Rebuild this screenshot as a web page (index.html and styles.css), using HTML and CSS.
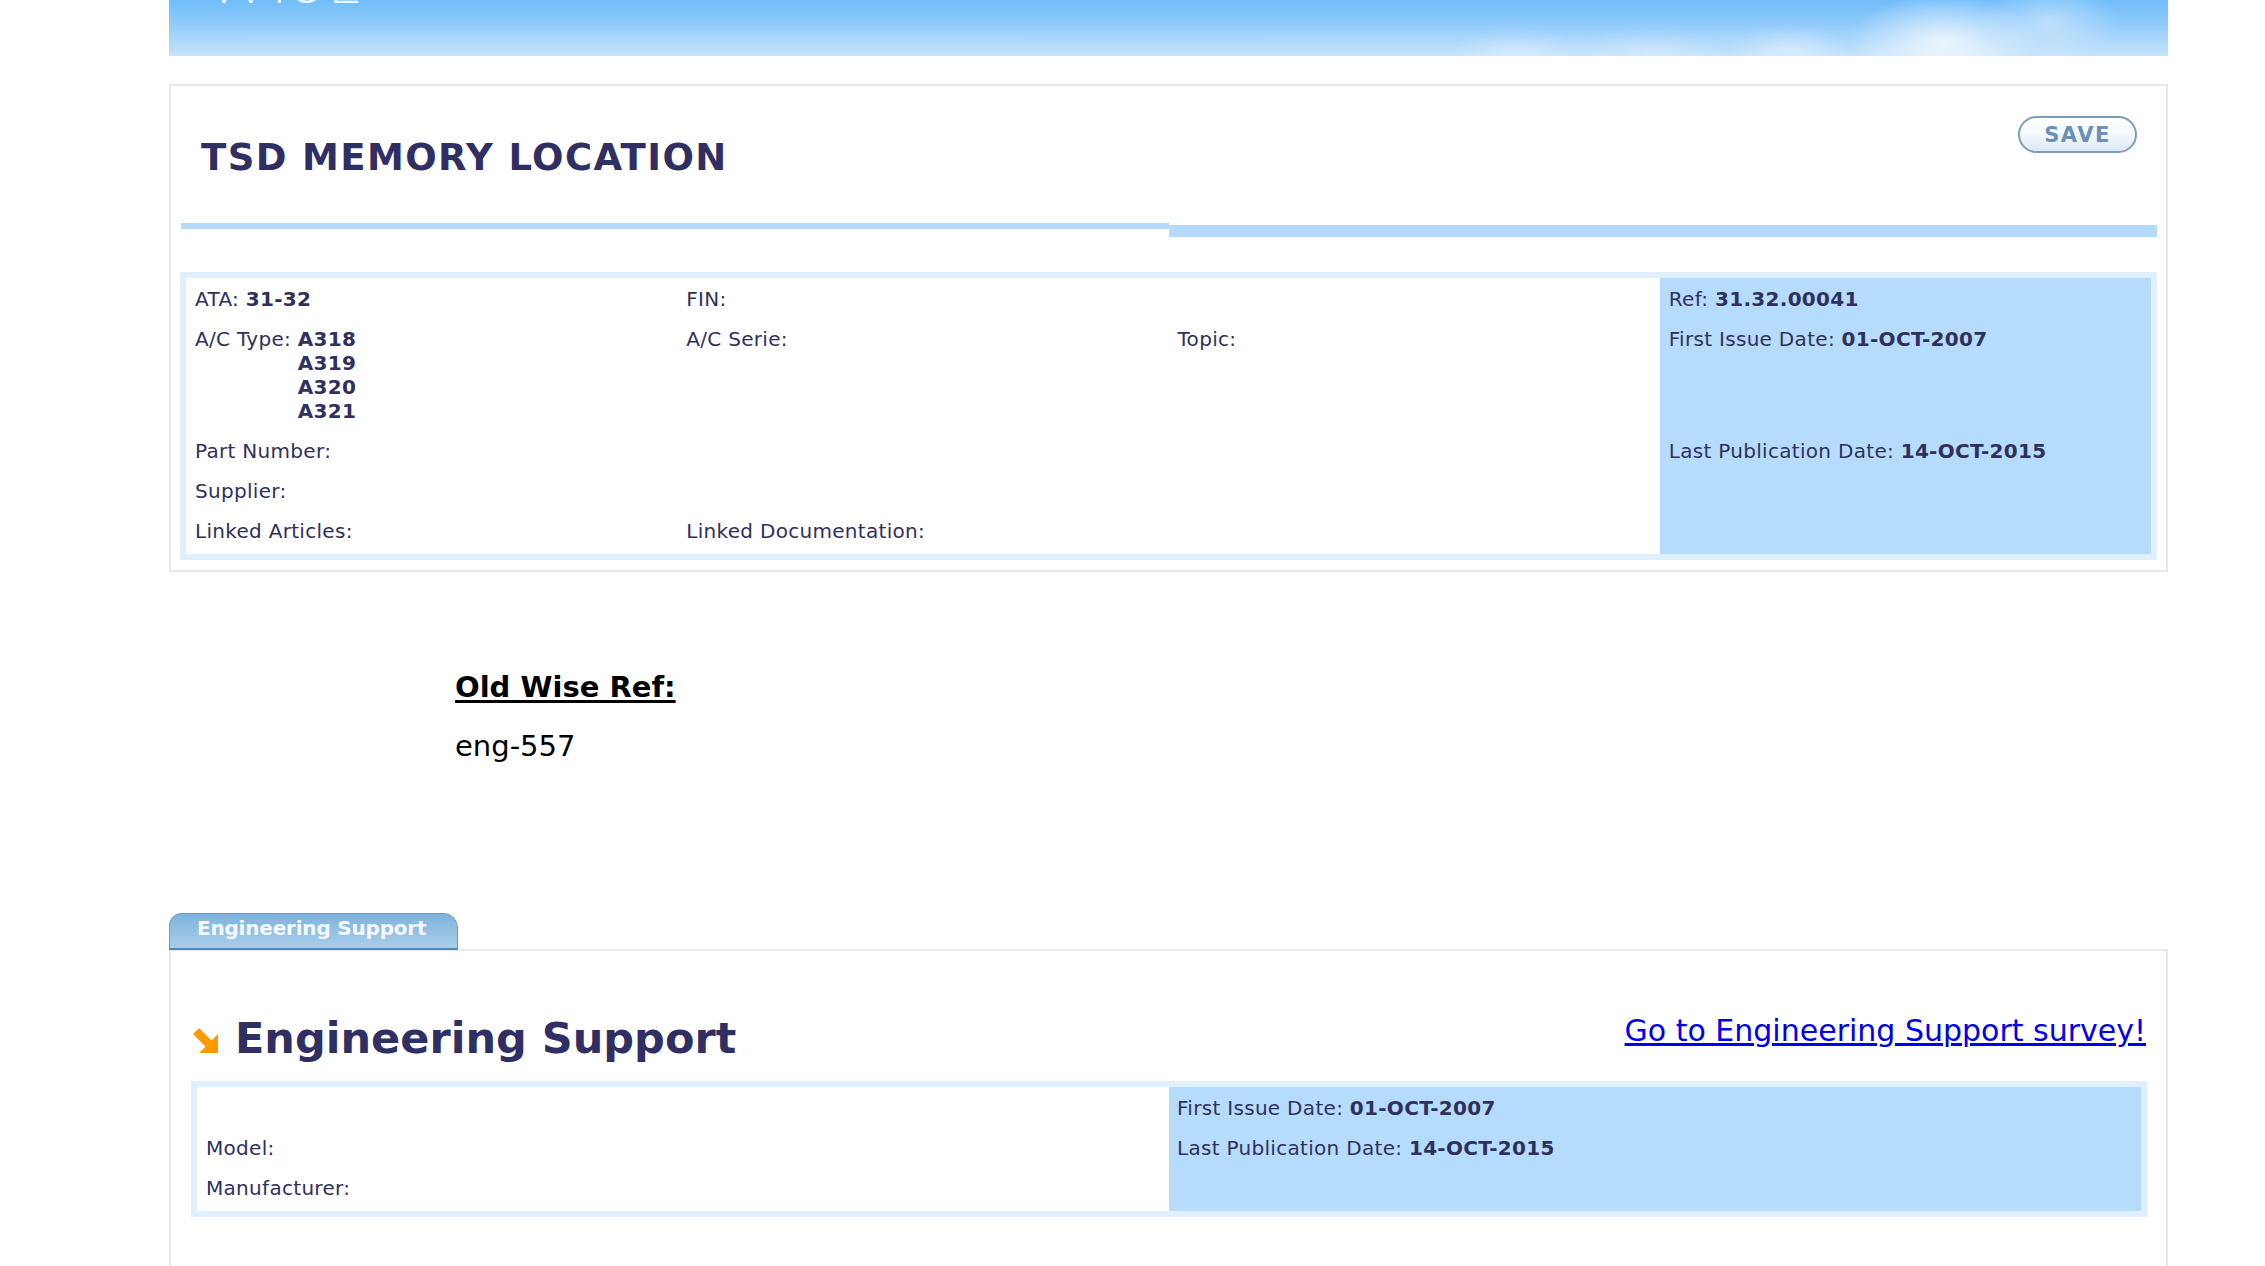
FILE: index.html
```html
<!DOCTYPE html>
<html lang="en">
<head>
<meta charset="utf-8">
<title>TSD MEMORY LOCATION</title>
<link rel="stylesheet" href="styles.css">
</head>
<body>
<div class="page">
  <div class="banner"><span class="logo">WISE</span></div>

  <section class="panel doc">
    <div class="doc-head">
      <h1 class="doc-title">TSD MEMORY LOCATION</h1>
      <button class="save" type="button">SAVE</button>
    </div>
    <div class="bars"><div class="bar bar-left"></div><div class="bar bar-right"></div></div>
    <div class="info info4">
      <div class="cell">ATA: <b>31-32</b></div>
      <div class="cell">FIN:</div>
      <div class="cell"></div>
      <div class="cell">Ref: <b>31.32.00041</b></div>

      <div class="cell"><span class="types">A/C Type: <b class="type-list">A318<br>A319<br>A320<br>A321</b></span></div>
      <div class="cell">A/C Serie:</div>
      <div class="cell">Topic:</div>
      <div class="cell">First Issue Date: <b>01-OCT-2007</b></div>

      <div class="cell">Part Number:</div>
      <div class="cell"></div>
      <div class="cell"></div>
      <div class="cell">Last Publication Date: <b>14-OCT-2015</b></div>

      <div class="cell">Supplier:</div>
      <div class="cell"></div>
      <div class="cell"></div>
      <div class="cell"></div>

      <div class="cell">Linked Articles:</div>
      <div class="cell">Linked Documentation:</div>
      <div class="cell"></div>
      <div class="cell"></div>
    </div>
  </section>

  <div class="oldref">
    <div class="oldref-label">Old Wise Ref:</div>
    <div class="oldref-value">eng-557</div>
  </div>

  <div class="tabs"><div class="tab">Engineering Support</div></div>
  <section class="panel eng">
    <div class="eng-head">
      <h2 class="eng-title">
        <svg class="arrow" width="26" height="26" viewBox="0 0 26 26" aria-hidden="true"><path d="M1 7 L7 1 L19.5 13.5 L26 7 L26 26 L7 26 L13.5 19.5 Z" fill="#ff9a00"/></svg>
        Engineering Support
      </h2>
      <a class="survey" href="#">Go to Engineering Support survey!</a>
    </div>
    <div class="info info2">
      <div class="cell"></div>
      <div class="cell">First Issue Date: <b>01-OCT-2007</b></div>
      <div class="cell">Model:</div>
      <div class="cell">Last Publication Date: <b>14-OCT-2015</b></div>
      <div class="cell">Manufacturer:</div>
      <div class="cell"></div>
    </div>
  </section>
</div>
</body>
</html>
```
FILE: styles.css
```css
html, body {
  margin: 0;
  padding: 0;
  background: #ffffff;
}

body {
  font-family: "DejaVu Sans", Verdana, sans-serif;
  color: #30305f;
}

.page {
  width: 1999px;
  margin-left: 169px;
}

/* ---------- banner ---------- */
.banner {
  position: relative;
  height: 56px;
  overflow: hidden;
  background:
    radial-gradient(ellipse 95px 48px at 1775px 42px, rgba(255,255,255,0.75), rgba(255,255,255,0) 100%),
    radial-gradient(ellipse 70px 40px at 1880px 22px, rgba(255,255,255,0.4), rgba(255,255,255,0) 100%),
    radial-gradient(ellipse 60px 26px at 1620px 50px, rgba(255,255,255,0.35), rgba(255,255,255,0) 100%),
    radial-gradient(ellipse 70px 24px at 1350px 52px, rgba(255,255,255,0.3), rgba(255,255,255,0) 100%),
    radial-gradient(ellipse 80px 22px at 1480px 50px, rgba(255,255,255,0.25), rgba(255,255,255,0) 100%),
    linear-gradient(180deg, #70bdf9 0%, #93cbfa 45%, #c6e4fc 100%);
}

.logo {
  position: absolute;
  left: 40px;
  top: -46px;
  font-family: Lato, "DejaVu Sans", sans-serif;
  font-weight: 300;
  font-size: 56px;
  line-height: 56px;
  letter-spacing: 6px;
  color: rgba(255, 255, 255, 0.9);
}

/* ---------- panels ---------- */
.panel {
  border: 2px solid #e5e8ec;
  background: #ffffff;
}

.doc {
  margin-top: 28px;
  padding: 0 9px 10px 10px;
}

.doc-head {
  display: flex;
  justify-content: space-between;
  align-items: flex-start;
  height: 137px;
  box-sizing: border-box;
  padding: 0 20px 0 20px;
}

.doc-title {
  margin: 50px 0 0 0;
  font-size: 37px;
  font-weight: bold;
  letter-spacing: 1.4px;
  line-height: normal;
  color: #2f2f63;
}

.save {
  margin-top: 30px;
  width: 119px;
  height: 37px;
  padding: 0;
  border: 2px solid #7d9dbc;
  border-radius: 19px;
  background: linear-gradient(180deg, #ffffff 0%, #f4f9fd 45%, #dcebf6 100%);
  font-family: "DejaVu Sans", Verdana, sans-serif;
  font-weight: bold;
  font-size: 21px;
  letter-spacing: 1.5px;
  color: #6a91b5;
}

.bars {
  display: flex;
  height: 14px;
}

.bar {
  flex: 1;
  background: #b4dafb;
}

.bar-left {
  height: 6px;
}

.bar-right {
  height: 12px;
  margin-top: 2px;
}

/* ---------- info tables ---------- */
.info {
  display: grid;
  border: 6px solid #dfeffd;
  font-size: 20px;
  line-height: 24px;
  letter-spacing: 0.3px;
}

.info b {
  font-weight: bold;
}

.cell {
  padding: 8px 9px;
}

.info4 {
  margin: 35px 0 0 -1px;
  grid-template-columns: repeat(4, 1fr);
}

.info4 > .cell:nth-child(-n+4) {
  padding-top: 9px;
}

.info4 > .cell:nth-last-child(-n+4) {
  padding-bottom: 11px;
}

.info4 > .cell:nth-child(4n) {
  background: #b6dcfc;
}

.types {
  display: inline-flex;
  align-items: flex-start;
  white-space: pre;
}

.type-list {
  display: inline-block;
}

.info2 {
  margin-top: 18px;
  grid-template-columns: 1fr 1fr;
}

.info2 > .cell:nth-child(-n+2) {
  padding-top: 9px;
}

.info2 > .cell:nth-last-child(-n+2) {
  padding-bottom: 11px;
}

.info2 > .cell:nth-child(2n) {
  background: #b6dcfc;
  padding-left: 8px;
}

/* ---------- old reference ---------- */
.oldref {
  margin: 98px 0 0 286px;
  color: #000000;
  font-size: 29px;
  line-height: normal;
}

.oldref-label {
  font-weight: bold;
  text-decoration: underline;
  text-underline-offset: 3px;
  text-decoration-thickness: 3px;
}

.oldref-value {
  margin-top: 25px;
}

/* ---------- tab ---------- */
.tabs {
  display: flex;
  margin-top: 150px;
}

.tab {
  position: relative;
  width: 289px;
  height: 37px;
  box-sizing: border-box;
  padding: 2px 0 0 27px;
  border: 1px solid #6a9bc9;
  border-bottom: 2px solid #4f86bb;
  border-radius: 13px 15px 0 0;
  background: linear-gradient(180deg, #80b2dc 0%, #92bfe3 45%, #aacde9 100%);
  font-size: 20px;
  font-weight: bold;
  line-height: 24px;
  letter-spacing: -0.2px;
  color: #f3f8fd;
}

/* ---------- engineering support ---------- */
.eng {
  margin-top: -1px;
  padding: 0 19px 100px 20px;
}

.eng-head {
  display: flex;
  justify-content: space-between;
  align-items: flex-start;
  margin-top: 62px;
}

.eng-title {
  display: flex;
  align-items: center;
  gap: 17px;
  margin: 0;
  font-size: 43px;
  font-weight: bold;
  line-height: normal;
  color: #2f2f63;
}

.arrow {
  margin: 4px 0 0 1px;
  flex: none;
}

.survey {
  margin-right: 1px;
  font-size: 30px;
  line-height: normal;
  color: #0000ee;
  text-decoration: underline;
}
```
